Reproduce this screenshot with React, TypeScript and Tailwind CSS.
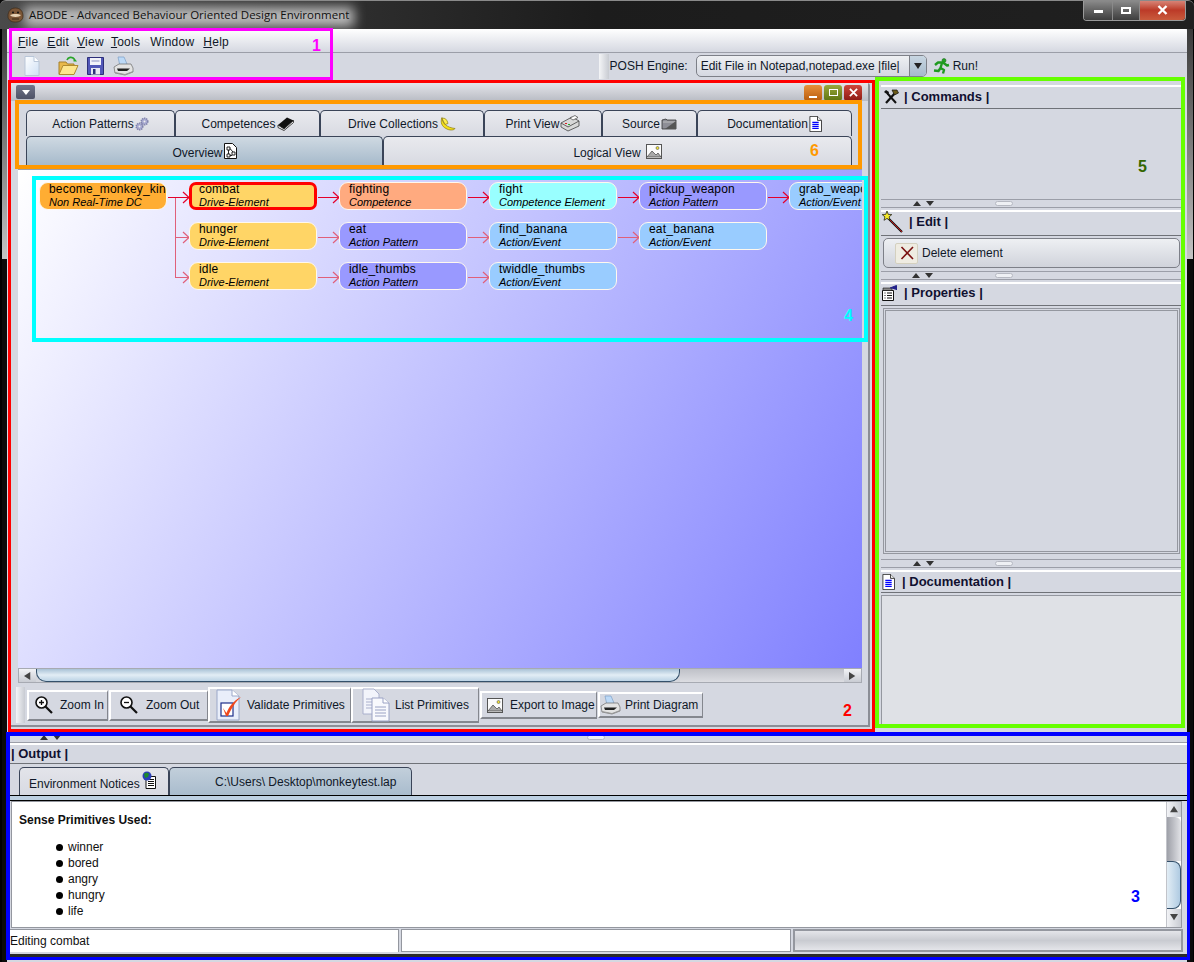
import React from 'react';

const fontBase = "font-['Liberation_Sans',Arial,sans-serif]";

function PageIcon({ lines = false, className = '' }: { lines?: boolean; className?: string }) {
    return (
        <svg viewBox="0 0 16 20" className={className}>
            <path d="M1 .5h9.500l5 5v14H1z" fill="#fff" stroke="#1a1a1a" />
            <path d="M10.500 .5v5h5" fill="#eee" stroke="#1a1a1a" />
            {lines && <path d="M4 8h8M4 10.500h8M4 13h8M4 15.500h8" stroke="#0000ff" strokeWidth="1.500" />}
        </svg>
    );
}

function NewFileIcon() {
    return (
        <svg viewBox="0 0 16 20" className="h-[20px] w-[16px]">
            <defs>
                <linearGradient id="newf" x1="0" y1="0" x2="1" y2="1">
                    <stop offset="0" stopColor="#ffffff" />
                    <stop offset="1" stopColor="#cfe0f5" />
                </linearGradient>
            </defs>
            <path d="M1 .5h9l5 5v14H1z" fill="url(#newf)" stroke="#b9c6d8" />
            <path d="M10 .5v5h5" fill="#fff" stroke="#b9c6d8" />
        </svg>
    );
}

function OpenIcon() {
    return (
        <svg viewBox="0 0 21 20" className="h-[20px] w-[21px]">
            <path d="M1 6h7l1.500 2H16v10H1z" fill="#e8b84a" stroke="#a5802b" />
            <path d="M1 18.500 5 9.500h15l-4 9z" fill="#fde58e" stroke="#b08a2f" />
            <path d="M9 4a4 4 0 0 1 7-1" fill="none" stroke="#2aa52a" strokeWidth="1.600" />
            <path d="M14 3.500h4.500V0z" fill="#2aa52a" transform="rotate(90 16 3)" />
        </svg>
    );
}

function SaveIcon() {
    return (
        <svg viewBox="0 0 17 18" className="h-[18px] w-[17px]">
            <path d="M.5.5h16v17H.5z" fill="#5157b8" stroke="#2d2f7a" />
            <rect x="3" y="1" width="11" height="7" fill="#f2f3fa" />
            <path d="M4.500 4h8" stroke="#8a8fc0" />
            <rect x="4" y="11" width="9" height="6.500" fill="#e6e7f2" />
            <rect x="6" y="12" width="2.500" height="5" fill="#2d2f7a" />
        </svg>
    );
}

function PrinterIcon({ className = '' }: { className?: string }) {
    return (
        <svg viewBox="0 0 21 20" className={className}>
            <path d="M5 1h6l3 7-7 2z" fill="#bcd9f7" stroke="#7d9fc6" strokeWidth=".7" />
            <path d="M1 11 6 8h12l2 4v4l-8 3-10-2z" fill="#e3e3e3" stroke="#777" strokeWidth=".8" />
            <path d="M4 12.500h13l-3 2.500H5z" fill="#222" />
            <path d="M2 16.500l10 2 8-3" stroke="#999" fill="none" />
        </svg>
    );
}

function MiniGears() {
    return (
        <svg viewBox="0 0 14 14" className="h-[14px] w-[14px]">
            <circle cx="9.500" cy="4.500" r="3.300" fill="#a7a9d0" stroke="#8083ab" strokeDasharray="1.300 .8" strokeWidth="1.500" />
            <circle cx="4.500" cy="9.500" r="3.300" fill="#a7a9d0" stroke="#8083ab" strokeDasharray="1.300 .8" strokeWidth="1.500" />
            <circle cx="9.500" cy="4.500" r="1" fill="#eee" />
            <circle cx="4.500" cy="9.500" r="1" fill="#eee" />
        </svg>
    );
}

function BookIcon() {
    return (
        <svg viewBox="0 0 17 14" className="h-[14px] w-[17px]">
            <path d="M1 8 10 .5l6.500 3L7 12z" fill="#111" />
            <path d="M1 8v2.500L7 13.500l9.500-8V3.500L7 12z" fill="#fff" stroke="#111" strokeWidth=".8" />
        </svg>
    );
}

function BananaIcon() {
    return (
        <svg viewBox="0 0 17 14" className="h-[15px] w-[17px]">
            <path d="M3 1c0 6 5 10 13 11-1 2-6 2-9 0C3 10 1 6 3 1z" fill="#f5e11a" stroke="#8b7a10" strokeWidth=".7" />
            <path d="M3 2c3-1 5 1 6 5l-3 1C5 6 4 4 3 2z" fill="#ffef4a" stroke="#8b7a10" strokeWidth=".7" />
        </svg>
    );
}

function FaxIcon() {
    return (
        <svg viewBox="0 0 20 17" className="h-[17px] w-[20px]">
            <path d="M1 8 12 2l7 4v5L8 16 1 12z" fill="#d8d8d8" stroke="#444" strokeWidth=".8" />
            <path d="M1 8l7 4 11-6" fill="none" stroke="#444" strokeWidth=".8" />
            <path d="M10 3 15 .5l3 2-5 2.500z" fill="#fff" stroke="#444" strokeWidth=".7" />
            <rect x="5" y="8" width="2" height="1" fill="#d22" />
            <rect x="8" y="9" width="2" height="1" fill="#2a2" />
        </svg>
    );
}

function FolderIcon() {
    return (
        <svg viewBox="0 0 16 12" className="h-[12px] w-[16px]">
            <path d="M1 2l4-1 1 1h9v9H1z" fill="#8e8e96" stroke="#333" strokeWidth=".8" />
            <path d="M2 4h13" stroke="#bbb" />
            <path d="M15 3v8H4z" fill="#555" />
        </svg>
    );
}

function LandscapeIcon() {
    return (
        <svg viewBox="0 0 16 15" className="h-[15px] w-[16px]">
            <rect x=".5" y=".5" width="15" height="14" fill="#fbfbfb" stroke="#555" />
            <circle cx="11.500" cy="4" r="1.500" fill="#f0e030" stroke="#555" strokeWidth=".6" />
            <path d="M1 13 6 7l4 4 2-2 3 4z" fill="#aaa" stroke="#444" strokeWidth=".7" />
        </svg>
    );
}

function DiagramPageIcon() {
    return (
        <svg viewBox="0 0 13 16" className="h-[16px] w-[13px]">
            <path d="M.5.5h8l4 4v11H.5z" fill="#fff" stroke="#111" />
            <path d="M3 4h3v3H3zM8 9h3v3H8zM3 11h3v3H3z" fill="#fff" stroke="#111" strokeWidth=".9" />
            <path d="M4.500 7v4M6 12.500h2M6 5.500l3 3.500" stroke="#111" strokeWidth=".9" fill="none" />
        </svg>
    );
}

function Magnifier({ plus }: { plus: boolean }) {
    return (
        <svg viewBox="0 0 20 20" className="h-[20px] w-[20px]">
            <circle cx="7.500" cy="7.500" r="5.500" fill="#fff" stroke="#111" strokeWidth="1.600" />
            <path d="M11.500 11.500 18 18" stroke="#111" strokeWidth="2.200" />
            <path d={plus ? 'M5 7.500h5M7.500 5v5' : 'M5 7.500h5'} stroke="#111" strokeWidth="1.300" />
        </svg>
    );
}

function ValidateIcon() {
    return (
        <svg viewBox="0 0 26 32" className="h-[32px] w-[26px]">
            <path d="M1 1h15l7 6v24H1z" fill="#e9eefa" stroke="#9aa7c8" />
            <path d="M16 1v6h7" fill="#fff" stroke="#9aa7c8" />
            <rect x="5" y="14" width="12" height="13" fill="#fff" stroke="#1e2f8a" strokeWidth="1.200" />
            <path d="M7 19l3.500 5C13 18 17 12 25 8c-6 5-9 11-13 19h-2z" fill="#f0481c" />
        </svg>
    );
}

function ListDocsIcon() {
    return (
        <svg viewBox="0 0 28 34" className="h-[34px] w-[28px]">
            <path d="M1 1h11l5 5v20H1z" fill="#f2f4fb" stroke="#aab0cc" />
            <path d="M4 11h9M4 14h9M4 17h9M4 20h9" stroke="#aab0cc" />
            <path d="M10 10h11l6 5v18H10z" fill="#f8f9fd" stroke="#9aa2c4" />
            <path d="M21 10v5h6" fill="#fff" stroke="#9aa2c4" />
            <path d="M13 19h11M13 22h11M13 25h11M13 28h11" stroke="#9aa2c4" />
        </svg>
    );
}

function RunIcon() {
    return (
        <svg viewBox="0 0 17 16" className="h-[16px] w-[17px]">
            <circle cx="11" cy="2.500" r="2" fill="#26a326" stroke="#0e5c0e" strokeWidth=".5" />
            <path d="M2 7l3-2.500h5L14 7.500l2-.5M9 5 7.500 10 11 12l-1 3.500M7.500 10 5.500 13 1 12.500" fill="none" stroke="#1f9a1f" strokeWidth="2.400" strokeLinejoin="round" />
        </svg>
    );
}

function ToolsIcon() {
    return (
        <svg viewBox="0 0 16 16" className="h-[16px] w-[16px]">
            <path d="M3 14 12 4" stroke="#111" strokeWidth="2.200" />
            <path d="M9 1h5l1.500 3-4 2z" fill="#6a5a1a" stroke="#111" strokeWidth=".7" />
            <path d="M13 14 4.500 4.500" stroke="#111" strokeWidth="2" />
            <path d="M1 3 3 1l3 2-1 3z" fill="#111" />
        </svg>
    );
}

function WandIcon() {
    return (
        <svg viewBox="0 0 22 22" className="h-[22px] w-[22px]">
            <path d="M6 7 20 21" stroke="#111" strokeWidth="2.200" />
            <path d="M8 9 20 21" stroke="#c21414" strokeWidth="1" />
            <path d="m5 0 1.300 3.400 3.500.2-2.700 2.200.9 3.500L5 7.400 2 9.300l.9-3.500L.2 3.600l3.500-.2z" fill="#f6ea2a" stroke="#111" strokeWidth=".7" />
        </svg>
    );
}

function PropsIcon() {
    return (
        <svg viewBox="0 0 16 16" className="h-[16px] w-[16px]">
            <path d="M.5 5.500h11v10H.5z" fill="#fff" stroke="#111" />
            <path d="M1 3h9v2.500H1z" fill="#888" stroke="#111" strokeWidth=".6" />
            <path d="M2.500 8h1M5 8h5M2.500 10.500h1M5 10.500h5M2.500 13h1M5 13h5" stroke="#111" />
            <path d="M8 3 14.500 .5V5" fill="#22228a" stroke="#22228a" />
        </svg>
    );
}

function GlobeDocIcon() {
    return (
        <svg viewBox="0 0 15 18" className="h-[18px] w-[15px]">
            <path d="M5 5.500h9.500v12H5z" fill="#fff" stroke="#111" />
            <path d="M7 8.500h6M7 10.500h6M7 12.500h6M7 14.500h6" stroke="#111" />
            <circle cx="6" cy="5" r="4.500" fill="#2a3fb8" />
            <path d="M3 3c2-2 4-1 5 0l-1 3-3 1z" fill="#1c8a2a" />
        </svg>
    );
}

function AppLogo() {
    return (
        <svg viewBox="0 0 17 16" className="h-[16px] w-[17px]">
            <path d="M1 9c0-5 3-8 7.500-8S16 4 16 9c0 4-3 6-7.500 6S1 13 1 9z" fill="#7b5636" stroke="#3c2a18" strokeWidth=".7" />
            <path d="M3 8c2-1.500 9-1.500 11 0-1 2.500-10 2.500-11 0z" fill="#e6d2b4" />
            <circle cx="6" cy="5.500" r="1" fill="#111" />
            <circle cx="11" cy="5.500" r="1" fill="#111" />
            <path d="M5 12h7" stroke="#3c2a18" />
        </svg>
    );
}

function DeleteX() {
    return (
        <svg viewBox="0 0 14 14" className="h-[14px] w-[14px]">
            <path d="M1.500 1 13 13M13 1 1.500 13" stroke="#7a1010" strokeWidth="1.600" />
        </svg>
    );
}

function Triangle({ dir, className = '' }: { dir: 'up' | 'down' | 'left' | 'right'; className?: string }) {
    const d = { up: 'M0 7 4.500 0 9 7z', down: 'M0 0h9L4.500 7z', left: 'M7 0v9L0 4.500z', right: 'M0 0v9l7-4.500z' }[dir];
    return (
        <svg viewBox="0 0 9 9" className={`h-[8px] w-[8px] ${className}`}>
            <path d={d} fill="#444" />
        </svg>
    );
}

function Splitter({ arrowsAt, gripAt }: { arrowsAt: string; gripAt: string }) {
    return (
        <div className={`flex h-[9px] shrink-0 items-center border-y border-t-[#9b9ea8] border-b-[#9b9ea8] bg-[#d5d8e1] ${arrowsAt}`}>
            <svg viewBox="0 0 22 5" className="h-[5px] w-[22px]">
                <path d="M0 5 4 0l4 5zM13 0h8l-4 5z" fill="#333" />
            </svg>
            <span className={`h-[5px] w-[18px] rounded-sm border border-[#b6b9c2] bg-[#eef0f4] ${gripAt}`} />
        </div>
    );
}

function PanelHeader({ icon, title, height, gap }: { icon: React.ReactNode; title: string; height: string; gap: string }) {
    return (
        <div className={`flex shrink-0 items-center border-t-2 border-b border-r border-t-white border-b-[#6f7278] border-r-[#8b8e96] bg-[#d5d8e1] pl-[1px] ${height} ${gap}`}>
            {icon}
            <span className="text-[13px] font-bold text-[#101030]">| {title} |</span>
        </div>
    );
}

const rowOneTabs = [
    { label: 'Action Patterns', icon: <MiniGears />, w: 'w-[149px]' },
    { label: 'Competences', icon: <BookIcon />, w: 'w-[145px]' },
    { label: 'Drive Collections', icon: <BananaIcon />, w: 'w-[164px]' },
    { label: 'Print View', icon: <FaxIcon />, w: 'w-[118px]' },
    { label: 'Source', icon: <FolderIcon />, w: 'w-[95px]' },
    { label: 'Documentation', icon: <PageIcon lines className="h-[16px] w-[13px]" />, w: 'w-[155px]' },
];

function Tab({ children, width, selected = false }: { children: React.ReactNode; width: string; selected?: boolean }) {
    return (
        <div
            className={`flex shrink-0 items-center justify-center gap-[1px] rounded-t-[5px] border border-b-0 border-[#3a4458] text-[12px] text-[#101828] ${width} ${
                selected ? 'bg-gradient-to-b from-[#cfd9e2] to-[#a6bacb]' : 'bg-gradient-to-b from-[#e9eaee] to-[#d8dae2]'
            }`}
        >
            {children}
        </div>
    );
}

type NodeKind = 'dc' | 'de' | 'comp' | 'ce' | 'ap' | 'ev';

const nodeColours: Record<NodeKind, string> = {
    dc: 'bg-[#ffad33]',
    de: 'bg-[#ffd566]',
    comp: 'bg-[#ffaa7f]',
    ce: 'bg-[#99ffff]',
    ap: 'bg-[#9999ff]',
    ev: 'bg-[#99ccff]',
};

const nodeRows: { name: string; sub: string; kind: NodeKind; selected?: boolean }[][] = [
    [
        { name: 'become_monkey_king', sub: 'Non Real-Time DC', kind: 'dc' },
        { name: 'combat', sub: 'Drive-Element', kind: 'de', selected: true },
        { name: 'fighting', sub: 'Competence', kind: 'comp' },
        { name: 'fight', sub: 'Competence Element', kind: 'ce' },
        { name: 'pickup_weapon', sub: 'Action Pattern', kind: 'ap' },
        { name: 'grab_weapon', sub: 'Action/Event', kind: 'ev' },
    ],
    [
        { name: 'hunger', sub: 'Drive-Element', kind: 'de' },
        { name: 'eat', sub: 'Action Pattern', kind: 'ap' },
        { name: 'find_banana', sub: 'Action/Event', kind: 'ev' },
        { name: 'eat_banana', sub: 'Action/Event', kind: 'ev' },
    ],
    [
        { name: 'idle', sub: 'Drive-Element', kind: 'de' },
        { name: 'idle_thumbs', sub: 'Action Pattern', kind: 'ap' },
        { name: 'twiddle_thumbs', sub: 'Action/Event', kind: 'ev' },
    ],
];

function DiagramNode({ name, sub, kind, selected }: { name: string; sub: string; kind: NodeKind; selected?: boolean }) {
    return (
        <div
            className={`h-[28px] w-[128px] shrink-0 overflow-hidden whitespace-nowrap text-black ${nodeColours[kind]} ${
                selected ? 'rounded-[7px] border-[3px] border-[#ff0000] pl-[7px]' : 'rounded-[9px] border border-[#fff8ee] pl-[9px]'
            }`}
        >
            <div className={`text-[12px] leading-[14px] tracking-[.2px] ${selected ? 'mt-[-3px]' : 'mt-[-1px]'}`}>{name}</div>
            <div className="text-[11px] italic leading-[13px]">{sub}</div>
        </div>
    );
}

function Edge({ x1, x2, y, strong = false }: { x1: number; x2: number; y: number; strong?: boolean }) {
    const colour = strong ? '#e4002b' : '#e0607a';
    return (
        <g stroke={colour} fill="none">
            <path d={`M${x1} ${y + 0.5}H${x2}`} />
            <path d={`M${x2 - 6} ${y - 5}L${x2} ${y + 0.5}L${x2 - 6} ${y + 6}`} strokeWidth="1.200" />
        </g>
    );
}

function Diagram() {
    return (
        <div className="relative min-h-0 flex-1 overflow-hidden border-t border-t-[#9b9ea8] bg-[linear-gradient(120.7deg,#ffffff,#8080ff)] pl-[21px] pt-[12px]">
            <svg className="absolute left-0 top-0 h-[120px] w-[842px]">
                <path d="M157.500 27.500V107.500" stroke="#e0607a" />
                <Edge x1={150} x2={171} y={27} strong />
                <Edge x1={157} x2={171} y={67} />
                <Edge x1={157} x2={171} y={107} />
                <Edge x1={300} x2={321} y={27} strong />
                <Edge x1={300} x2={321} y={67} />
                <Edge x1={300} x2={321} y={107} />
                <Edge x1={450} x2={471} y={27} strong />
                <Edge x1={450} x2={471} y={67} />
                <Edge x1={450} x2={471} y={107} />
                <Edge x1={600} x2={621} y={27} strong />
                <Edge x1={600} x2={621} y={67} />
                <Edge x1={750} x2={771} y={27} strong />
            </svg>
            <div className="relative flex flex-col gap-[12px]">
                {nodeRows.map((row, i) => (
                    <div key={i} className={`flex gap-[22px] ${i > 0 ? 'pl-[150px]' : ''}`}>
                        {row.map((node) => (
                            <DiagramNode key={node.name} {...node} />
                        ))}
                    </div>
                ))}
            </div>
        </div>
    );
}

function ToolButton({ icon, label, className, gap }: { icon: React.ReactNode; label: string; className: string; gap: string }) {
    return (
        <div className={`flex shrink-0 items-center border-y-2 border-l-2 border-r border-t-white border-l-white border-b-[#84878e] border-r-[#84878e] text-[12px] text-[#101828] ${gap} ${className}`}>
            {icon}
            <span className="whitespace-nowrap">{label}</span>
        </div>
    );
}

function InternalFrame() {
    return (
        <div className="flex h-[644px] w-[859px] shrink-0 flex-col rounded-t-[3px] border-r-2 border-b-2 border-r-[#8b8e96] border-b-[#8b8e96] bg-[#d5d8e1]">
            <div className="flex h-[18px] shrink-0 items-center justify-between bg-gradient-to-b from-[#e4e5ea] to-[#b9bcc4] pl-[5px] pr-[6px]">
                <div className="flex h-[14px] w-[19px] items-center justify-center rounded-[2px] bg-gradient-to-b from-[#70758a] to-[#4e5266]">
                    <svg viewBox="0 0 8 5" className="h-[5px] w-[8px]">
                        <path d="M0 0h8L4 5z" fill="#fff" />
                    </svg>
                </div>
                <div className="flex gap-[2px] pt-[1px]">
                    <div className="flex h-[16px] w-[18px] items-end justify-center rounded-[3px] bg-gradient-to-b from-[#e89038] to-[#b85c08] pb-[3px]">
                        <span className="h-[2px] w-[8px] bg-white" />
                    </div>
                    <div className="flex h-[16px] w-[18px] items-center justify-center rounded-[3px] bg-gradient-to-b from-[#9aa83a] to-[#5e7410]">
                        <span className="h-[7px] w-[9px] border border-white" />
                    </div>
                    <div className="flex h-[16px] w-[18px] items-center justify-center rounded-[3px] bg-gradient-to-b from-[#d0453a] to-[#8c1a12]">
                        <svg viewBox="0 0 10 10" className="h-[9px] w-[9px]">
                            <path d="M1 1l8 8M9 1 1 9" stroke="#fff" strokeWidth="2" />
                        </svg>
                    </div>
                </div>
            </div>

            <div className="flex shrink-0 flex-col pl-[15px] pt-[8px]">
                <div className="flex h-[27px] pt-[1px]">
                    {rowOneTabs.map((t) => (
                        <Tab key={t.label} width={t.w}>
                            {t.label}
                            {t.icon}
                        </Tab>
                    ))}
                </div>
                <div className="flex h-[29px]">
                    <Tab width="w-[357px]" selected>
                        <span className="pt-[3px]">Overview</span>
                        <DiagramPageIcon />
                    </Tab>
                    <Tab width="w-[469px]">
                        <span className="pt-[3px]">Logical View</span>
                        <span className="ml-[4px]">
                            <LandscapeIcon />
                        </span>
                    </Tab>
                </div>
            </div>

            <div className="ml-[7px] mr-[6px] flex min-h-0 flex-1 flex-col border-t border-t-black pt-[3px]">
                <Diagram />
                <div className="mb-[2px] flex h-[15px] shrink-0 items-center border border-[#a7aab2] bg-[#d4d6dc]">
                    <div className="flex h-full w-[17px] shrink-0 items-center justify-center bg-gradient-to-b from-[#f2f3f6] to-[#c9ccd3]">
                        <Triangle dir="left" />
                    </div>
                    <div className="h-full w-[644px] shrink-0 rounded-b-[10px] border-b border-l border-r border-[#34506a] bg-gradient-to-b from-[#a9c2d6] via-[#e2edf5] to-[#bcd3e5]" />
                    <div className="h-full flex-1 bg-gradient-to-b from-[#bfc1c8] to-[#dcdde2]" />
                    <div className="flex h-full w-[17px] shrink-0 items-center justify-center bg-gradient-to-b from-[#f2f3f6] to-[#c9ccd3]">
                        <Triangle dir="right" />
                    </div>
                </div>
            </div>

            <div className="flex h-[40px] shrink-0 items-center pl-[5px]">
                <div className="mr-[2px] h-[36px] w-[9px] shrink-0 bg-gradient-to-r from-[#f4f5f7] to-[#c8cbd2]" />
                <ToolButton icon={<span className="mx-[5px] flex"><Magnifier plus /></span>} label="Zoom In" gap="gap-[1px]" className="h-[31px] w-[81px]" />
                <ToolButton icon={<span className="ml-[8px] mr-[6px] flex"><Magnifier plus={false} /></span>} label="Zoom Out" gap="gap-[1px]" className="ml-[1px] h-[31px] w-[99px]" />
                <ToolButton icon={<span className="ml-[6px] flex"><ValidateIcon /></span>} label="Validate Primitives" gap="gap-[5px]" className="h-[36px] w-[143px]" />
                <ToolButton icon={<span className="ml-[9px] flex"><ListDocsIcon /></span>} label="List Primitives" gap="gap-[5px]" className="h-[36px] w-[128px]" />
                <ToolButton icon={<span className="ml-[5px] flex"><LandscapeIcon /></span>} label="Export to Image" gap="gap-[7px]" className="ml-[1px] h-[28px] w-[117px]" />
                <ToolButton icon={<PrinterIcon className="h-[20px] w-[21px]" />} label="Print Diagram" gap="gap-[4px]" className="ml-[1px] h-[26px] w-[105px]" />
            </div>
        </div>
    );
}

function RightPanels() {
    return (
        <div className="flex h-[643px] w-[301px] shrink-0 flex-col pt-[2px]">
            <PanelHeader icon={<span className="ml-[1px] flex"><ToolsIcon /></span>} title="Commands" height="h-[24px] pb-[2px]" gap="gap-[5px]" />
            <div className="h-[90px] shrink-0" />
            <Splitter arrowsAt="pl-[32px]" gripAt="ml-[60px]" />
            <div className="h-[2px]" />
            <PanelHeader icon={<WandIcon />} title="Edit" height="h-[26px] pb-[3px]" gap="gap-[5px]" />
            <div className="mx-[2px] mt-[2px] flex h-[30px] shrink-0 items-center gap-[4px] rounded-[5px] border border-[#7d8088] bg-gradient-to-b from-[#eef0f3] to-[#d0d3db] pl-[11px] text-[12px] text-[#101828]">
                <span className="flex h-[21px] w-[23px] items-center justify-center rounded-[2px] border border-[#d4d0bf] bg-[#efece2]">
                    <DeleteX />
                </span>
                Delete element
            </div>
            <div className="h-[3px]" />
            <Splitter arrowsAt="pl-[31px]" gripAt="ml-[61px]" />
            <div className="h-[2px]" />
            <PanelHeader icon={<PropsIcon />} title="Properties" height="h-[24px] pb-[3px]" gap="gap-[6px]" />
            <div className="mx-[2px] mt-[2px] h-[246px] shrink-0 border border-[#94979f] p-[1px]">
                <div className="h-full border border-[#94979f]" />
            </div>
            <div className="h-[5px]" />
            <Splitter arrowsAt="pl-[32px]" gripAt="ml-[60px]" />
            <div className="h-[2px]" />
            <PanelHeader icon={<PageIcon lines className="h-[16px] w-[13px]" />} title="Documentation" height="h-[23px] pb-[1px]" gap="gap-[7px]" />
            <div className="mt-[2px] flex-1 border border-[#94979f] bg-[#dfe1e6]" />
        </div>
    );
}

function OutputArea() {
    return (
        <div className="flex h-[225px] shrink-0 flex-col">
            <div className="flex h-[10px] shrink-0 items-center border-b border-b-[#9b9ea8] bg-[#d5d8e1]">
                <svg viewBox="0 0 22 5" className="ml-[33px] h-[5px] w-[22px]">
                    <path d="M0 5 4 0l4 5zM13 0h8l-4 5z" fill="#333" />
                </svg>
                <span className="ml-[525px] h-[5px] w-[18px] rounded-sm border border-[#b6b9c2] bg-[#eef0f4]" />
            </div>
            <div className="flex h-[21px] shrink-0 items-center border-t-2 border-b border-t-white border-b-[#6f7278] bg-[#d5d8e1] pl-[4px] text-[13px] font-bold text-[#101030]">
                | Output |
            </div>
            <div className="flex h-[31px] shrink-0 items-end pl-[12px]">
                <div className="flex h-[28px] w-[150px] items-center gap-[1px] rounded-t-[5px] border border-b-0 border-[#3a4458] bg-gradient-to-b from-[#e3e4ea] to-[#d8dae2] pl-[9px] pt-[5px] text-[12px] text-[#101828]">
                    Environment Notices
                    <span className="-mt-[8px] flex"><GlobeDocIcon /></span>
                </div>
                <div className="flex h-[28px] w-[243px] items-center rounded-t-[5px] border border-b-0 border-[#3a4458] bg-gradient-to-b from-[#c2cfdb] to-[#a9bccd] pl-[45px] text-[12px] text-[#101828]">
                    C:\Users\ Desktop\monkeytest.lap
                </div>
            </div>
            <div className="ml-[3px] h-[6px] shrink-0 border-y border-y-black bg-[#bdd0e2]" />
            <div className="ml-[4px] mr-[5px] flex h-[127px] shrink-0 border border-[#94979f] bg-white">
                <div className="min-w-0 flex-1 pl-[7px] pt-[10px] text-[12px] leading-[16px] text-[#101010]">
                    <p className="font-bold">Sense Primitives Used:</p>
                    <ul className="mt-[11px] pl-[37px]">
                        {['winner', 'bored', 'angry', 'hungry', 'life'].map((s) => (
                            <li key={s} className="flex items-center gap-[5px]">
                                <span className="h-[7px] w-[7px] rounded-full bg-black" />
                                {s}
                            </li>
                        ))}
                    </ul>
                </div>
                <div className="flex w-[15px] shrink-0 flex-col border-l border-l-[#c2c4ca]">
                    <div className="flex h-[15px] items-center justify-center bg-gradient-to-r from-[#f2f3f6] to-[#c9ccd3]">
                        <Triangle dir="up" />
                    </div>
                    <div className="h-[44px] rounded-tr-[6px] bg-gradient-to-r from-[#9ea0a8] to-[#e2e3e7]" />
                    <div className="h-[48px] rounded-r-[8px] border-y border-r border-[#34506a] bg-gradient-to-r from-[#e2edf5] to-[#b0cbe2]" />
                    <div className="flex flex-1 items-center justify-center bg-gradient-to-r from-[#f2f3f6] to-[#c9ccd3]">
                        <Triangle dir="down" />
                    </div>
                </div>
            </div>
            <div className="flex h-[26px] shrink-0 gap-[2px] pl-[3px] pr-[4px] pt-[1px] text-[12px]">
                <div className="flex h-[23px] w-[389px] items-center border-t border-r border-[#94979f] bg-white text-[#101010]">Editing combat</div>
                <div className="h-[23px] w-[390px] border border-[#94979f] bg-white" />
                <div className="h-[23px] flex-1 border-2 border-[#94979f] bg-gradient-to-b from-[#e4e5e9] via-[#c9cbd1] to-[#e4e5e9]" />
            </div>
            <div className="h-[4px] shrink-0 bg-[#2a2a2a]" />
        </div>
    );
}

function Annotations() {
    return (
        <>
            <div className="absolute left-[9px] top-[28px] h-[52px] w-[324px] border-[3px] border-[#ff00ff]" />
            <div className="absolute left-[8px] top-[80px] h-[652px] w-[867px] border-[3px] border-[#ff0000]" />
            <div className="absolute left-[875px] top-[77px] h-[651px] w-[310px] border-4 border-[#66ff00]" />
            <div className="absolute left-[6px] top-[732px] h-[228px] w-[1184px] border-[3px] border-[#0000ff] border-l-4 border-t-4" />
            <div className="absolute left-[15px] top-[100px] h-[69px] w-[847px] border-4 border-[#ff9900]" />
            <div className="absolute left-[32px] top-[176px] h-[166px] w-[836px] border-4 border-[#00ffff]" />
            <span className="absolute left-[312px] top-[34px] text-[16px] font-bold text-[#ff00ff]">1</span>
            <span className="absolute left-[843px] top-[699px] text-[16px] font-bold text-[#ff0000]">2</span>
            <span className="absolute left-[1131px] top-[885px] text-[16px] font-bold text-[#0000ff]">3</span>
            <span className="absolute left-[844px] top-[304px] text-[16px] font-bold text-[#00ffff]">4</span>
            <span className="absolute left-[1138px] top-[155px] text-[16px] font-bold text-[#336600]">5</span>
            <span className="absolute left-[810px] top-[139px] text-[16px] font-bold text-[#ff9900]">6</span>
        </>
    );
}

function SideStrip({ side }: { side: 'left' | 'right' }) {
    return (
        <div className={`flex w-[7px] shrink-0 flex-col ${side === 'left' ? 'border-l-2 border-l-black' : 'border-r border-r-black'}`}>
            <div className="h-[230px] shrink-0 bg-gradient-to-b from-[#3a3a3a] to-[#c4c4c4]" />
            <div className="flex-1 bg-[#0a0a0a]" />
        </div>
    );
}

export default function App() {
    return (
        <div className={`relative flex h-[962px] w-[1194px] flex-col overflow-hidden bg-[#0a0a0a] ${fontBase}`}>
            <div className="relative flex h-[29px] shrink-0 items-start overflow-hidden rounded-t-[6px] border-t border-[#8a8a8a] bg-gradient-to-r from-[#4a4a4a] via-[#1c1c1c] to-[#202020] pl-[7px]">
                <div className="absolute left-[24px] top-[6px] h-[20px] w-[330px] bg-[#bcbcbc] blur-[6px]" />
                <span className="relative mt-[6px] flex"><AppLogo /></span>
                <span className="relative ml-[5px] mt-[5px] font-['Open_Sans',sans-serif] text-[11.500px] text-[#101010]">
                    ABODE - Advanced Behaviour Oriented Design Environment
                </span>
                <div className="absolute right-[8px] top-[-1px] flex h-[21px] overflow-hidden rounded-b-[4px] border border-t-0 border-[#9a9a9a]">
                    <div className="flex w-[29px] items-center justify-center border-r border-[#8a8a8a] bg-gradient-to-b from-[#8e8e8e] to-[#3e3e3e]">
                        <span className="mt-[3px] h-[3px] w-[9px] bg-white" />
                    </div>
                    <div className="flex w-[27px] items-center justify-center border-r border-[#8a8a8a] bg-gradient-to-b from-[#8e8e8e] to-[#3e3e3e]">
                        <span className="h-[7px] w-[10px] border-2 border-white" />
                    </div>
                    <div className="flex w-[45px] items-center justify-center bg-gradient-to-b from-[#d98a7e] via-[#bc3a28] to-[#c95a3c]">
                        <svg viewBox="0 0 10 10" className="h-[10px] w-[11px]">
                            <path d="M1 1l8 8M9 1 1 9" stroke="#fff" strokeWidth="2.400" />
                        </svg>
                    </div>
                </div>
            </div>

            <div className="flex min-h-0 flex-1">
                <SideStrip side="left" />
                <div className="flex min-w-0 flex-1 flex-col bg-[#d5d8e1]">
                    <div className="flex h-[24px] shrink-0 items-center rounded-t-[2px] border-b border-b-[#9b9ea8] bg-gradient-to-b from-white to-[#d5d8e1] pl-[11px] pt-[2px] text-[12px] tracking-[.25px] text-[#101828]">
                        <span><u>F</u>ile</span>
                        <span className="ml-[9px]"><u>E</u>dit</span>
                        <span className="ml-[8px]"><u>V</u>iew</span>
                        <span className="ml-[7px]"><u>T</u>ools</span>
                        <span className="ml-[10px]">Window</span>
                        <span className="ml-[9px]"><u>H</u>elp</span>
                    </div>

                    <div className="flex h-[26px] shrink-0 items-center pl-[17px] pr-[209px] text-[12px] text-[#101828]">
                        <NewFileIcon />
                        <span className="ml-[18px] flex"><OpenIcon /></span>
                        <span className="ml-[8px] flex"><SaveIcon /></span>
                        <span className="ml-[9px] flex"><PrinterIcon className="h-[20px] w-[21px]" /></span>
                        <div className="ml-auto flex items-center">
                            <span className="h-[25px] w-[10px] bg-gradient-to-r from-[#f4f5f7] to-[#c8cbd2]" />
                            <span className="ml-[1px]">POSH Engine:</span>
                            <div className="ml-[8px] flex h-[22px] w-[231px] items-center overflow-hidden rounded-[5px] border border-[#7d8088] bg-gradient-to-b from-[#eef0f3] to-[#d5d8e1] pl-[4px]">
                                <span className="flex-1 whitespace-nowrap">Edit File in Notepad,notepad.exe |file|</span>
                                <span className="flex h-full w-[17px] items-center justify-center border-l border-l-[#7d8088] bg-gradient-to-b from-[#c8d6e2] to-[#a6bacb]">
                                    <svg viewBox="0 0 8 6" className="h-[6px] w-[8px]">
                                        <path d="M0 0h8L4 6z" fill="#222" />
                                    </svg>
                                </span>
                            </div>
                            <span className="ml-[6px] flex"><RunIcon /></span>
                            <span className="ml-[3px]">Run!</span>
                        </div>
                    </div>

                    <div className="flex h-[654px] shrink-0 items-start gap-[11px] pl-[4px] pt-[4px]">
                        <InternalFrame />
                        <RightPanels />
                    </div>

                    <OutputArea />
                </div>
                <SideStrip side="right" />
            </div>
            <Annotations />
        </div>
    );
}
